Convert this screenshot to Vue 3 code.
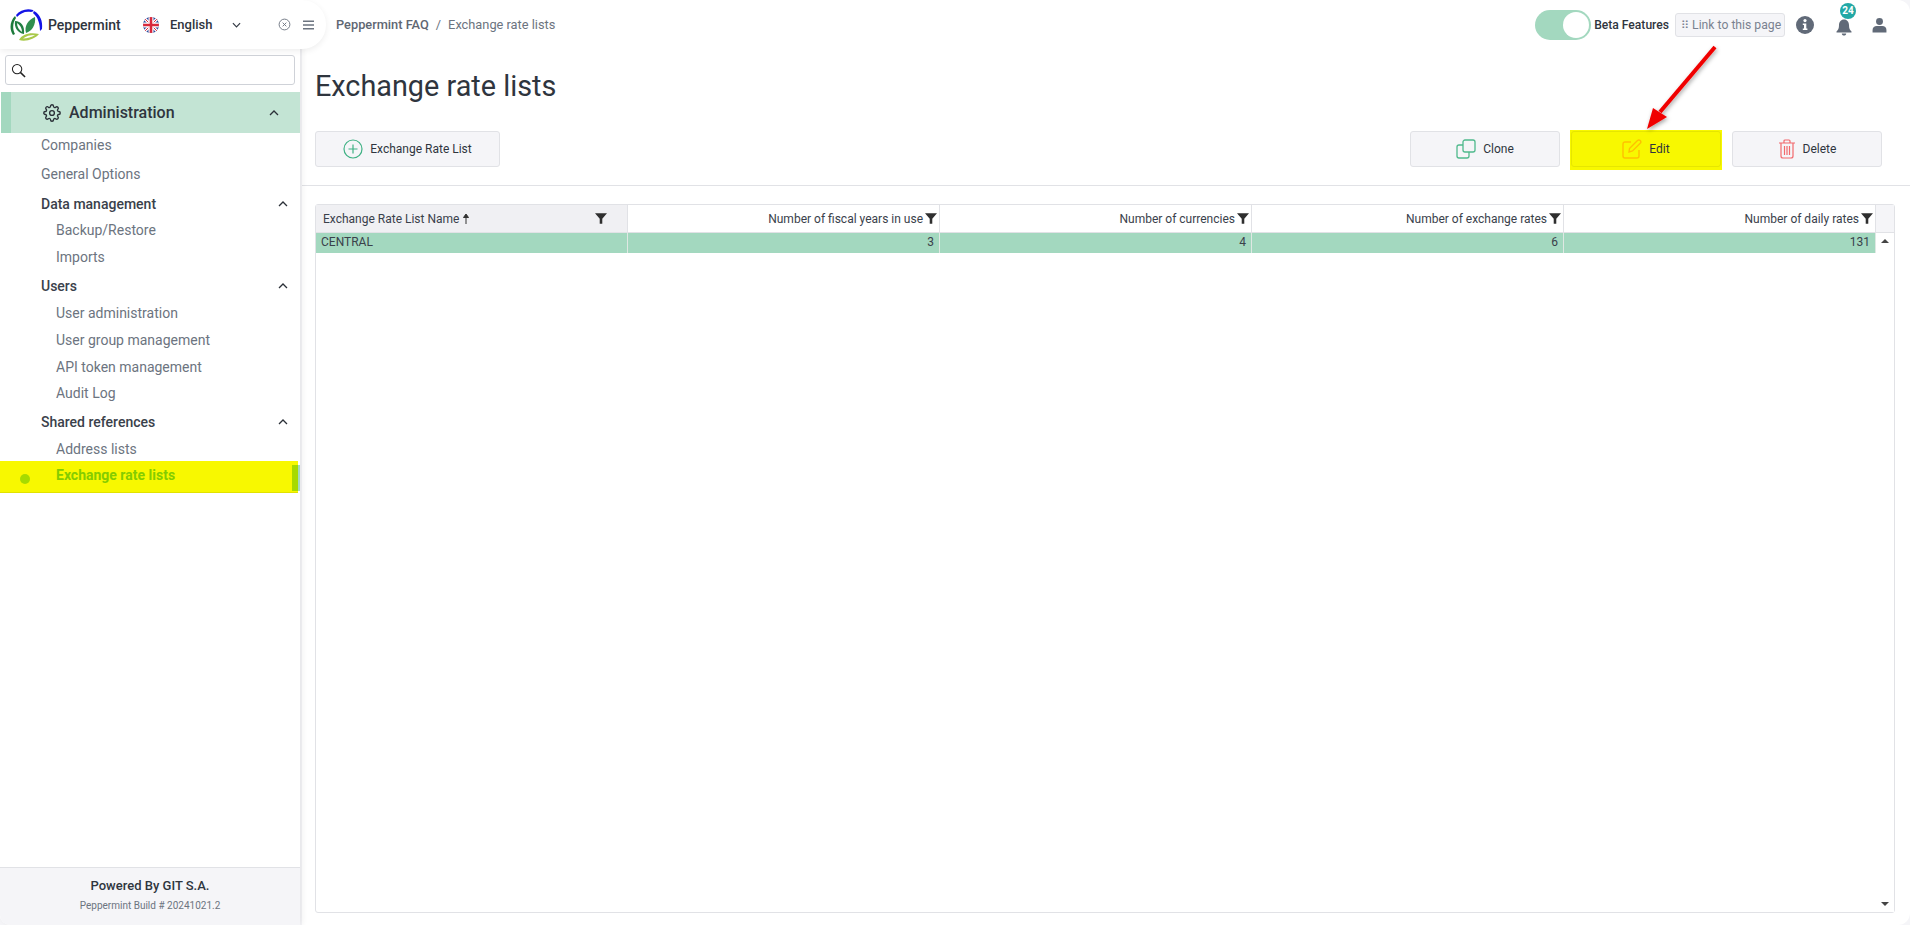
<script setup>
const groups = [
  { title: 'Data management', items: ['Backup/Restore', 'Imports'] },
  { title: 'Users', items: ['User administration', 'User group management', 'API token management', 'Audit Log'] },
]
const cols = [
  { label: 'Number of fiscal years in use', value: '3' },
  { label: 'Number of currencies', value: '4' },
  { label: 'Number of exchange rates', value: '6' },
  { label: 'Number of daily rates', value: '131' },
]
</script>

<template>
  <div class="app">
    <aside class="side">
      <div class="brand">
        <svg class="logo" viewBox="0 0 33 32">
          <path d="M6 6C10 1 17 -1 23 1C24 2 23 3 21 3C15 2 11 4 7 8Z" fill="#1414e6"/>
          <path d="M24 2C30 5 33 12 32 20L30 22C30 15 28 8 23 4Z" fill="#1414e6"/>
          <path d="M5 7C0 12 -1 20 3 26L5 25C2 20 3 13 6 9Z" fill="#1c7a3a"/>
          <path d="M5 12C11 12 15 17 14 25C8 24 4 19 5 12ZM7 14C7 18 9 21 12 23C12 19 10 16 7 14Z" fill="#227f42" fill-rule="evenodd"/>
          <path d="M25 8C26 16 22 22 16 24C14 17 18 11 25 8Z" fill="#2f8f4e"/>
          <path d="M9 31C12 25 20 23 29 25C25 30 16 33 9 31ZM13 29.500C17 29.500 22 28 25 26C20 26 16 27 13 29.500Z" fill="#a9c94a" fill-rule="evenodd"/>
        </svg>
        <span class="brand-name">Peppermint</span>
        <svg class="flag" viewBox="0 0 16 16">
          <defs><clipPath id="fc"><circle cx="8" cy="8" r="8"/></clipPath></defs>
          <g clip-path="url(#fc)">
            <rect width="16" height="16" fill="#2b4a9b"/>
            <path d="M0 0L16 16M16 0L0 16" stroke="#fff" stroke-width="3"/>
            <path d="M0 0L16 16M16 0L0 16" stroke="#d8283c" stroke-width="1"/>
            <path d="M8 0V16M0 8H16" stroke="#fff" stroke-width="5"/>
            <path d="M8 0V16M0 8H16" stroke="#d8283c" stroke-width="2.6"/>
          </g>
        </svg>
        <span class="lang">English</span>
        <svg class="lang-chev" viewBox="0 0 10 6"><path d="M1 1L5 5L9 1" fill="none" stroke="#333a44" stroke-width="1.3"/></svg>
        <svg class="close-ic" viewBox="0 0 14 14">
          <circle cx="7" cy="7" r="5.8" fill="none" stroke="#6c7480" stroke-width="1"/>
          <path d="M5 5L9 9M9 5L5 9" stroke="#6c7480" stroke-width="1"/>
        </svg>
        <svg class="menu-ic" viewBox="0 0 12 10"><path d="M0 1H12M0 5H12M0 9H12" stroke="#6c7480" stroke-width="1.6"/></svg>
      </div>

      <div class="search">
        <svg class="search-ic" viewBox="0 0 16 16">
          <circle cx="6.500" cy="6.500" r="5" fill="none" stroke="#222" stroke-width="1.1"/>
          <path d="M10 10L15 15" stroke="#222" stroke-width="1.6"/>
        </svg>
      </div>

      <div class="admin">
        <svg class="gear" viewBox="0 0 24 24" fill="none" stroke="#2b3038" stroke-width="1.8">
          <circle cx="12" cy="12" r="3.2"/>
          <path d="M19.4 15a1.7 1.7 0 0 0 .3 1.8l.1.1a2 2 0 1 1-2.9 2.9l-.1-.1a1.7 1.7 0 0 0-2.8 1.2V21a2 2 0 1 1-4 0v-.1a1.7 1.7 0 0 0-2.9-1.2l-.1.1a2 2 0 1 1-2.8-2.9l.1-.1a1.7 1.7 0 0 0-1.2-2.8H3a2 2 0 1 1 0-4h.1a1.7 1.7 0 0 0 1.2-2.9l-.1-.1a2 2 0 1 1 2.9-2.8l.1.1a1.7 1.7 0 0 0 1.8.3H9a1.7 1.7 0 0 0 1-1.5V3a2 2 0 1 1 4 0v.1a1.7 1.7 0 0 0 2.9 1.2l.1-.1a2 2 0 1 1 2.8 2.9l-.1.1a1.7 1.7 0 0 0-.3 1.8V9a1.7 1.7 0 0 0 1.5 1H21a2 2 0 1 1 0 4h-.1a1.7 1.7 0 0 0-1.5 1Z"/>
        </svg>
        <span class="admin-label">Administration</span>
        <svg class="chev admin-chev" viewBox="0 0 10 6"><path d="M1 5L5 1L9 5" fill="none" stroke="#2b3038" stroke-width="1.3"/></svg>
      </div>

      <nav class="nav">
        <div class="top-item">Companies</div>
        <div class="top-item">General Options</div>
        <template v-for="g in groups" :key="g.title">
          <div class="group">
            <span>{{ g.title }}</span>
            <svg class="chev" viewBox="0 0 10 6"><path d="M1 5L5 1L9 5" fill="none" stroke="#2b3038" stroke-width="1.3"/></svg>
          </div>
          <div v-for="i in g.items" :key="i" class="sub">{{ i }}</div>
        </template>
        <div class="group">
          <span>Shared references</span>
          <svg class="chev" viewBox="0 0 10 6"><path d="M1 5L5 1L9 5" fill="none" stroke="#2b3038" stroke-width="1.3"/></svg>
        </div>
        <div class="sub">Address lists</div>
        <div class="sub active">
          <i class="dot"></i>
          <span>Exchange rate lists</span>
          <i class="bar"></i>
        </div>
      </nav>

      <footer class="foot">
        <div class="powered">Powered By GIT S.A.</div>
        <div class="build">Peppermint Build # 20241021.2</div>
      </footer>
    </aside>

    <main class="main">
      <header class="top">
        <div class="crumbs"><b>Peppermint FAQ</b><span class="sep">/</span><span>Exchange rate lists</span></div>
        <div class="top-right">
          <div class="toggle"><i></i></div>
          <span class="beta">Beta Features</span>
          <span class="link"><em>⠿</em> Link to this page</span>
          <svg class="info" viewBox="0 0 18 18">
            <circle cx="9" cy="9" r="9" fill="#616a78"/>
            <circle cx="9" cy="4.600" r="1.6" fill="#fff"/>
            <path d="M6.8 7.5H10.3V12.6H11.4V14H6.8V12.6H8V8.9H6.8Z" fill="#fff"/>
          </svg>
          <div class="bell">
            <svg viewBox="0 0 16 18"><path d="M8 1.5C4.8 1.5 3 4 3 7C3 10.6 2.2 11.8 0.5 13.4V14.4H15.5V13.4C13.8 11.8 13 10.6 13 7C13 4 11.2 1.5 8 1.5Z" fill="#616a78"/><path d="M5.8 15.4H10.2C10.2 16.8 9.2 17.6 8 17.6C6.8 17.6 5.8 16.8 5.8 15.4Z" fill="#616a78"/></svg>
            <span class="badge">24</span>
          </div>
          <svg class="user" viewBox="0 0 16 16">
            <circle cx="8" cy="4.200" r="3.700" fill="#616a78"/>
            <path d="M0.6 16V13.2C0.6 10.6 2.6 9 5 9H11C13.4 9 15.4 10.6 15.4 13.2V16Z" fill="#616a78"/>
          </svg>
        </div>
      </header>

      <h1 class="title">Exchange rate lists</h1>

      <div class="actions">
        <button class="btn add">
          <svg class="ic" viewBox="0 0 20 20"><circle cx="10" cy="10" r="9" fill="none" stroke="#3fb184" stroke-width="1.2"/><path d="M10 5.500V14.500M5.500 10H14.500" stroke="#3fb184" stroke-width="1.2"/></svg>
          Exchange Rate List
        </button>
        <div class="right-actions">
          <button class="btn">
            <svg class="ic" viewBox="0 0 20 20" fill="none" stroke="#4fb98c" stroke-width="1.3"><rect x="7" y="1" width="12" height="12" rx="2"/><path d="M7 6H3A2 2 0 0 0 1 8V17A2 2 0 0 0 3 19H11A2 2 0 0 0 13 17V13"/></svg>
            Clone
          </button>
          <div class="hl">
            <button class="btn edit">
              <svg class="ic" viewBox="0 0 20 20" fill="none" stroke="#ffc000" stroke-width="1.4"><path d="M9 3H3A2 2 0 0 0 1 5V17A2 2 0 0 0 3 19H15A2 2 0 0 0 17 17V11"/><path d="M7.500 9.500L15.500 1.500C16.300 .8 17.400 .8 18.200 1.600C19 2.400 19 3.500 18.200 4.300L10.500 12L7 13Z"/></svg>
              Edit
            </button>
          </div>
          <button class="btn">
            <svg class="ic trash" viewBox="0 0 18 20" fill="none" stroke="#f2696d" stroke-width="1.2"><path d="M1 4H17M6 4V2A1 1 0 0 1 7 1H11A1 1 0 0 1 12 2V4M3 4V17A2 2 0 0 0 5 19H13A2 2 0 0 0 15 17V4M6.500 7V16M9 7V16M11.500 7V16"/></svg>
            Delete
          </button>
        </div>
      </div>

      <section class="table">
        <div class="thead">
          <div class="th first-col">
            <span>Exchange Rate List Name</span>
            <svg class="sort" viewBox="0 0 8 12"><path d="M4 11V2M1.500 4.500L4 1L6.500 4.500Z" fill="#333" stroke="#333" stroke-width="1"/></svg>
            <svg class="funnel end" viewBox="0 0 14 14"><path d="M0 1H14L8.500 7.200V13H5.500V7.200Z" fill="#2f2f2f"/></svg>
          </div>
          <div v-for="c in cols" :key="c.label" class="th num">
            <span>{{ c.label }}</span>
            <svg class="funnel" viewBox="0 0 14 14"><path d="M0 1H14L8.500 7.200V13H5.500V7.200Z" fill="#2f2f2f"/></svg>
          </div>
          <div class="th-scroll"></div>
        </div>
        <div class="tbody">
          <div class="rows">
            <div class="row">
              <div class="td first-col">CENTRAL</div>
              <div v-for="c in cols" :key="c.label" class="td num">{{ c.value }}</div>
            </div>
          </div>
          <div class="scroll">
            <i class="up"></i>
            <i class="down"></i>
          </div>
        </div>
      </section>
    </main>

    <svg class="arrow" viewBox="0 0 100 100">
      <defs>
        <filter id="as" x="-30%" y="-30%" width="160%" height="160%">
          <feDropShadow dx="1" dy="2" stdDeviation="2" flood-color="#000" flood-opacity=".35"/>
        </filter>
      </defs>
      <g filter="url(#as)">
        <path d="M85 7L30 72" stroke="#f00000" stroke-width="4" fill="none"/>
        <path d="M17 89L23 68L37 77Z" fill="#f00000"/>
      </g>
    </svg>
  </div>
</template>

<style scoped>
.app {
  position: relative;
  width: 1910px;
  height: 925px;
  overflow: hidden;
  display: flex;
  background: #f5f5f8;
  font-family: Roboto, "Liberation Sans", sans-serif;
  color: #2f353e;
}
.side {
  position: relative;
  z-index: 2;
  width: 300px;
  flex: none;
  display: flex;
  flex-direction: column;
  background: #fff;
  border-bottom-left-radius: 10px;
  box-shadow: 2px 0 6px rgba(0, 0, 0, .07);
}
.brand {
  width: 326px;
  height: 49px;
  flex: none;
  display: flex;
  align-items: center;
  background: #fff;
  border-radius: 0 24px 24px 0;
  box-shadow: 0 2px 6px rgba(0, 0, 0, .07);
  box-sizing: border-box;
  padding-left: 10px;
  position: relative;
  z-index: 1;
}
.logo { width: 33px; height: 32px; flex: none; }
.brand-name { margin-left: 5px; font-size: 14px; font-weight: 500; width: 95px; }
.flag { width: 16px; height: 16px; flex: none; }
.lang { margin-left: 11px; font-size: 13px; font-weight: 500; width: 62px; }
.lang-chev { width: 9px; height: 6px; flex: none; }
.close-ic { width: 13px; height: 13px; margin-left: 37px; flex: none; }
.menu-ic { width: 11px; height: 10px; margin-left: 12px; flex: none; }
.search {
  height: 30px;
  margin: 6px 5px 7px;
  border: 1px solid #cfd2d8;
  border-radius: 3px;
  box-sizing: border-box;
  display: flex;
  align-items: center;
  padding-left: 5px;
  flex: none;
}
.search-ic { width: 15px; height: 15px; }
.admin {
  height: 41px;
  flex: none;
  margin-left: 1px;
  background: #c3e4d4;
  border-left: 10px solid #a3d8bf;
  box-sizing: border-box;
  display: flex;
  align-items: center;
  padding-left: 32px;
}
.gear { width: 18px; height: 18px; }
.admin-label { margin-left: 8px; font-size: 16px; font-weight: 500; flex: 1; }
.chev { width: 10px; height: 6px; flex: none; }
.admin-chev { margin-right: 21px; }
.nav { flex: 1; font-size: 14px; margin-top: -3px; }
.top-item, .sub, .group { display: flex; align-items: center; box-sizing: border-box; }
.top-item { height: 29px; padding-left: 41px; color: #6c7480; }
.group {
  height: 29px;
  padding: 2px 12px 0 41px;
  font-weight: 500;
  color: #3a414b;
  justify-content: space-between;
}
.sub { height: 26.800px; padding-left: 56px; color: #6c7480; }
.sub.active {
  position: relative;
  height: 32px;
  width: 298px;
  margin-top: -2px;
  padding-bottom: 2px;
  background: #f8f800;
  color: #84cc00;
  font-weight: 700;
  border-bottom: 1px solid #e2e200;
}
.dot {
  position: absolute;
  left: 20px;
  top: 13px;
  width: 10px;
  height: 10px;
  border-radius: 50%;
  background: #a6da00;
}
.bar {
  position: absolute;
  right: 0;
  top: 4px;
  bottom: 1px;
  width: 6px;
  background: #a6da00;
}
.bar::after {
  content: "";
  position: absolute;
  left: 6px;
  top: 0;
  bottom: 0;
  width: 2px;
  background: #a3d8bf;
}
.foot {
  height: 58px;
  flex: none;
  background: #f5f5f8;
  border-top: 1px solid #e1e2e6;
  border-bottom-left-radius: 10px;
  box-sizing: border-box;
  text-align: center;
  padding-top: 10px;
}
.powered { font-size: 13px; font-weight: 500; line-height: 16px; }
.build { font-size: 10px; color: #6c7480; line-height: 16px; margin-top: 4px; }

.main {
  flex: 1;
  min-width: 0;
  margin-left: 2px;
  background: #fff;
  border-radius: 0 12px 12px 0;
  display: flex;
  flex-direction: column;
  padding: 0 15px 12px 13px;
  box-sizing: border-box;
}
.top {
  height: 49px;
  flex: none;
  display: flex;
  align-items: center;
  justify-content: space-between;
  padding-left: 21px;
  font-size: 12.800px;
  color: #6c7480;
}
.crumbs b { font-weight: 500; color: #5f6773; }
.sep { margin: 0 7px; }
.top-right { display: flex; align-items: center; }
.toggle {
  width: 56px;
  height: 30px;
  border-radius: 15px;
  background: #a3d8bf;
  position: relative;
  margin-top: 1px;
}
.toggle i {
  position: absolute;
  right: 2px;
  top: 2px;
  width: 26px;
  height: 26px;
  border-radius: 50%;
  background: #fff;
}
.beta { margin-left: 3px; font-size: 12.100px; font-weight: 500; color: #2f353e; }
.link {
  margin-left: 6px;
  height: 24px;
  width: 110px;
  box-sizing: border-box;
  border: 1px solid #e1e2e6;
  border-radius: 3px;
  background: #f5f5f8;
  font-size: 12.200px;
  line-height: 22px;
  padding-left: 5px;
  white-space: nowrap;
  color: #7a8290;
}
.link em { font-style: normal; font-family: "DejaVu Sans", sans-serif; font-size: 11px; }
.info { width: 18px; height: 18px; margin-left: 11px; }
.bell { position: relative; width: 16px; height: 18px; margin-left: 22px; margin-top: 4px; }
.bell svg { width: 16px; height: 18px; display: block; }
.badge {
  position: absolute;
  left: 4px;
  top: -15px;
  width: 16px;
  height: 16px;
  border-radius: 50%;
  background: #22a8a6;
  color: #fff;
  font-size: 10px;
  font-weight: 700;
  line-height: 16px;
  text-align: center;
}
.user { width: 15px; height: 16px; margin-left: 20px; margin-right: 8px; }

.title {
  margin: 19px 0 0;
  height: 63px;
  font-size: 28.800px;
  font-weight: 400;
  line-height: 36px;
  color: #2f353e;
  flex: none;
}
.actions {
  flex: none;
  display: flex;
  justify-content: space-between;
  align-items: center;
  height: 36px;
  margin: 0 -15px 18px -13px;
  padding: 0 28px 18px 13px;
  border-bottom: 1px solid #e1e2e6;
  box-sizing: content-box;
}
.right-actions { display: flex; align-items: center; gap: 10px; }
.btn {
  height: 36px;
  width: 150px;
  box-sizing: border-box;
  border: 1px solid #e1e2e6;
  border-radius: 3px;
  background: #f5f5f8;
  font: 12px Roboto, "Liberation Sans", sans-serif;
  color: #2f353e;
  display: flex;
  align-items: center;
  justify-content: center;
  gap: 7px;
  padding: 0;
}
.btn.add { width: 185px; }
.ic { width: 20px; height: 20px; flex: none; }
.trash { width: 18px; }
.hl {
  box-sizing: border-box;
  background: #f8f800;
  padding: 1px 1px 3px;
  height: 40px;
  margin: 1px 0 -1px;
}
.btn.edit { background: #f8f800; border-color: #e6e600; }

.table {
  flex: 1;
  min-height: 0;
  display: flex;
  flex-direction: column;
  border: 1px solid #e1e2e6;
  border-radius: 3px;
  font-size: 12px;
  color: #3a414b;
}
.thead { height: 28px; flex: none; display: flex; border-bottom: 1px solid #e1e2e6; box-sizing: border-box; }
.th {
  width: 309px;
  flex: none;
  display: flex;
  align-items: center;
  justify-content: flex-end;
  gap: 2px;
  border-right: 1px solid #e1e2e6;
  padding-right: 2px;
}
.th.first-col {
  width: 312px;
  background: #f0f0f3;
  justify-content: flex-start;
  padding: 0 0 0 7px;
  box-sizing: border-box;
  gap: 3px;
}
.sort { width: 8px; height: 12px; }
.funnel { width: 12px; height: 13px; flex: none; }
.funnel.end { margin-left: auto; margin-right: 20px; }
.th-scroll { flex: 1; background: #f5f5f8; }
.tbody { flex: 1; min-height: 0; display: flex; }
.rows { flex: 1; min-width: 0; }
.row { height: 20px; display: flex; background: #a3d8bf; color: #3a414b; }
.td {
  flex: none;
  line-height: 19px;
  border-right: 1px solid #dfe8e3;
}
.td.first-col { width: 306px; padding-left: 5px; }
.td.num { width: 306px; padding-right: 5px; text-align: right; }
.scroll { width: 18px; flex: none; position: relative; background: #fff; margin-left: 1px; }
.up, .down {
  position: absolute;
  left: 5px;
  width: 0;
  height: 0;
  border-left: 4px solid transparent;
  border-right: 4px solid transparent;
}
.up { top: 6px; border-bottom: 4px solid #444; }
.down { bottom: 6px; border-top: 4px solid #444; }
.arrow {
  position: absolute;
  left: 1630px;
  top: 40px;
  width: 100px;
  height: 100px;
  z-index: 5;
  pointer-events: none;
}
</style>

<style>
html, body { margin: 0; padding: 0; background: #fff; }
</style>
